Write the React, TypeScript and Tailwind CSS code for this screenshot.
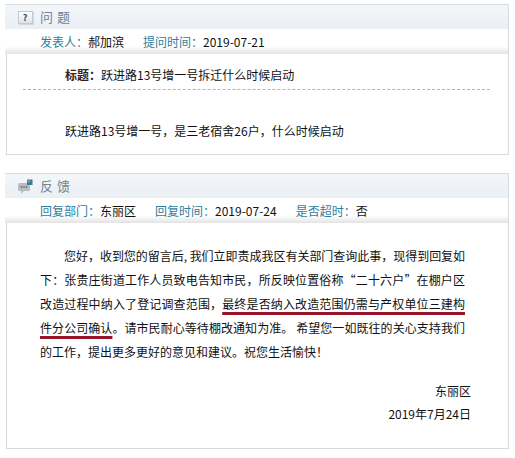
const font = "font-['Noto_Sans_CJK_SC','Noto_Sans',sans-serif]";

function QuestionIcon() {
  return (
    <div className="w-[15px] h-[13px] border border-[#c5cad1] bg-gradient-to-b from-white to-[#dfe3e8] shadow-[1px_1px_0_#d4d8dd] flex items-center justify-center text-[9px] font-bold leading-none text-[#34465a]">
      ?
    </div>
  );
}

function FeedbackIcon() {
  return (
    <svg width="17" height="17" viewBox="0 0 17 17">
      <rect x="1" y="5" width="12" height="8" rx="1.5" fill="#b9bdc2" />
      <polygon points="4,12.5 4,16 7.5,12.5" fill="#b9bdc2" />
      <circle cx="4.5" cy="9" r="0.9" fill="#6d7378" />
      <circle cx="7" cy="9" r="0.9" fill="#6d7378" />
      <circle cx="9.5" cy="9" r="0.9" fill="#6d7378" />
      <rect x="10" y="1.5" width="5.5" height="5.5" fill="#3d7e95" />
      <rect x="10.8" y="2.3" width="2" height="2" fill="#79aebf" />
    </svg>
  );
}

function PanelHeader({ icon, title }: { icon: React.ReactNode; title: string }) {
  return (
    <div className="h-[25px] border-t border-r border-[#d6dce3] bg-gradient-to-b from-[#f4f7fa] to-[#eaeff4] flex items-center pl-[10px]">
      <div className="w-[20px] flex justify-center">{icon}</div>
      <span className="ml-[5px] text-[13px] tracking-[4px] text-[#6f8293]">{title}</span>
    </div>
  );
}

function InfoRow({ items }: { items: { label: string; value: string }[] }) {
  return (
    <div className="h-[25px] border-r border-[#d6dce3] bg-gradient-to-b from-white from-[70%] to-[#e3e3e3] flex items-center pl-[35px] text-[12px]">
      {items.map((it, i) => (
        <span key={it.label} className={i > 0 ? "ml-[19px]" : ""}>
          <span className="text-[#2f7d9c]">{it.label}</span>
          <span className="text-[#111]">{it.value}</span>
        </span>
      ))}
    </div>
  );
}

const red = "underline decoration-[#981327] decoration-[3px] underline-offset-[3px]";

export default function App() {
  return (
    <div className={`w-[515px] h-[458px] bg-white pt-[4px] ${font}`}>
      <div className="ml-[5px] w-[504px]">
        <PanelHeader icon={<QuestionIcon />} title="问题" />
        <InfoRow
          items={[
            { label: "发表人：", value: "郝加滨" },
            { label: "提问时间：", value: "2019-07-21" },
          ]}
        />
        <div className="h-[101px] border-x border-b border-[#d9d9d9] ml-[1px] pt-[13px] text-[12px] text-[#111]">
          <div className="pl-[58px] leading-[16px]">
            <span className="font-bold text-[#3a1c20]">标题：</span>
            跃进路13号增一号拆迁什么时候启动
          </div>
          <div className="ml-[16px] mr-[18px] mt-[6px] border-t border-dashed border-[#b5b5b5]" />
          <div className="pl-[58px] mt-[33px] leading-[16px]">
            跃进路13号增一号，是三老宿舍26户，什么时候启动
          </div>
        </div>
      </div>

      <div className="ml-[5px] w-[504px] mt-[18px]">
        <PanelHeader icon={<FeedbackIcon />} title="反馈" />
        <InfoRow
          items={[
            { label: "回复部门：", value: "东丽区" },
            { label: "回复时间：", value: "2019-07-24" },
            { label: "是否超时：", value: "否" },
          ]}
        />
        <div className="h-[226px] border-x border-b border-[#d9d9d9] ml-[1px] pt-[21px] text-[12px] text-[#111]">
          <div className="pl-[33px] w-[458px] leading-[24px] [&>div]:whitespace-nowrap [&>div]:[text-align-last:justify] [&>div:last-child]:[text-align-last:left]">
            <div className="pl-[24px] tracking-[-0.1px]">您好，收到您的留言后, 我们立即责成我区有关部门查询此事，现得到回复如</div>
            <div>下：张贵庄街道工作人员致电告知市民，所反映位置俗称“二十六户”在棚户区</div>
            <div>
              改造过程中纳入了登记调查范围，<span className={red}>最终是否纳入改造范围仍需与产权单位三建构</span>
            </div>
            <div>
              <span className={red}>件分公司确认</span>。请市民耐心等待棚改通知为准。 希望您一如既往的关心支持我们
            </div>
            <div>的工作，提出更多更好的意见和建议。祝您生活愉快！</div>
          </div>
          <div className="mt-[15px] pr-[37px] text-right leading-[23px]">
            <div>东丽区</div>
            <div>2019年7月24日</div>
          </div>
        </div>
      </div>
    </div>
  );
}
